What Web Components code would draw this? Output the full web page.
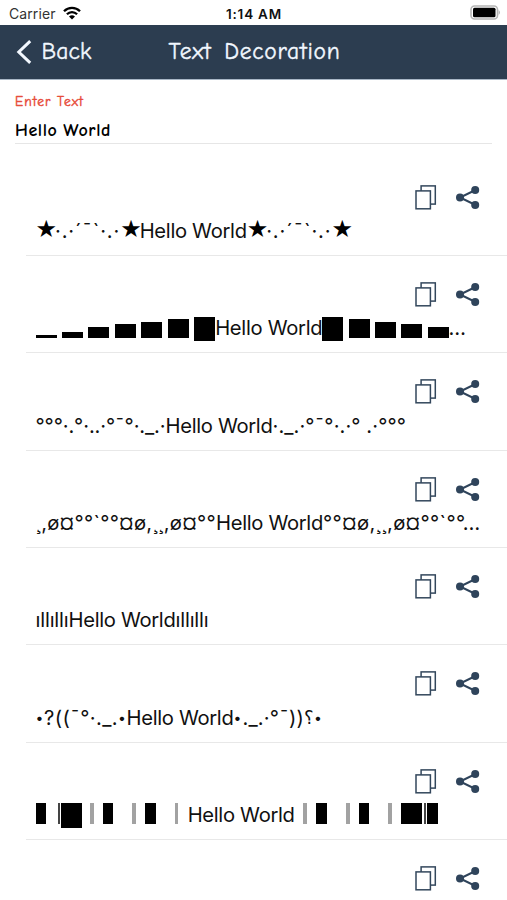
<!DOCTYPE html>
<html lang="en">
<head>
<meta charset="utf-8">
<title>Text Decoration</title>
<style>
  body {
    margin: 0;
    width: 507px;
    height: 900px;
    overflow: hidden;
    background: #fff;
    color: #111;
    font-family: Inter, "DejaVu Sans", sans-serif;
    --hand: "Chalkboard SE", "Comic Neue", Lato, sans-serif;
    --navy: #2c3d50;
  }
</style>
</head>
<body>
<status-bar></status-bar>
<nav-header><fit-run slot="back" width="50">Back</fit-run><fit-run slot="title" width="172">Text Decoration</fit-run></nav-header>
<text-field><fit-run slot="label" width="69">Enter Text</fit-run><fit-run slot="value" width="96">Hello World</fit-run></text-field>
<decor-list></decor-list>

<script>
  // a run of text spread over a fixed width
  class FitRun extends HTMLElement {
    constructor() {
      super();
      this.attachShadow({ mode: 'open' }).innerHTML = `
        <style>
          :host { display: block; flex: none; }
          span { display: inline-block; white-space: pre; vertical-align: top; }
        </style>
        <span><slot></slot></span>
      `;
    }

    connectedCallback() {
      const width = Number(this.getAttribute('width'));
      const span = this.shadowRoot.querySelector('span');
      const count = [...this.textContent].length;
      this.style.width = width + 'px';
      span.style.letterSpacing = (width - span.getBoundingClientRect().width) / count + 'px';
    }
  }

  // block and bar characters, drawn as solid cells
  class BlockGlyph extends HTMLElement {
    constructor() {
      super();
      this.attachShadow({ mode: 'open' }).innerHTML = `
        <style>
          :host {
            display: block;
            flex: none;
            overflow: hidden;
            background: currentColor;
            font-family: "DejaVu Sans", sans-serif;
            line-height: 1.3;
          }
        </style>
        <slot></slot>
      `;
    }

    connectedCallback() {
      const width = this.getAttribute('width');
      const height = this.getAttribute('height');
      this.style.width = width + 'px';
      this.style.height = height + 'px';
      this.style.fontSize = Math.min(width, height) * .5 + 'px';
      this.style.marginTop = this.getAttribute('top') + 'px';
      this.style.marginRight = this.getAttribute('gap') + 'px';
    }
  }

  class StatusBar extends HTMLElement {
    constructor() {
      super();
      this.attachShadow({ mode: 'open' }).innerHTML = `
        <style>
          :host {
            display: grid;
            grid-template-columns: 1fr auto 1fr;
            align-items: center;
            box-sizing: border-box;
            height: 25px;
            padding: 3px 6px 0 9px;
            font-size: 14px;
            line-height: 20px;
          }
          .carrier { display: flex; gap: 7px; align-items: center; color: #333; }
          .time { font-weight: 600; font-size: 13.5px; margin-left: -2px; }
          .battery { justify-self: end; margin-top: -3px; }
          svg { display: block; }
        </style>
        <div class="carrier">
          <fit-run width="46.5">Carrier</fit-run>
          <svg width="18" height="14" viewBox="0 0 18 14" fill="none" stroke="#000" stroke-width="2.3" style="margin-top:-3px">
            <path d="M1 5.2C5.5 .7 12.5 .7 17 5.2M3.9 8.3C6.8 5.4 11.2 5.4 14.1 8.3"/>
            <path d="M9 13.4L6 10.4Q9 7.9 12 10.4Z" fill="#000" stroke="none"/>
          </svg>
        </div>
        <fit-run class="time" width="56">1:14 AM</fit-run>
        <svg class="battery" width="31" height="15" viewBox="0 0 31 15">
          <rect x="1" y="1" width="26.5" height="13" rx="3.5" fill="#fff" stroke="#b5b5b5" stroke-width="1.6"/>
          <rect x="3" y="2.8" width="22.5" height="9.4" rx="1.5" fill="#000"/>
          <path d="M28.7 5Q31 7.5 28.7 10Z" fill="#aaa"/>
        </svg>
      `;
    }
  }

  class NavHeader extends HTMLElement {
    constructor() {
      super();
      this.attachShadow({ mode: 'open' }).innerHTML = `
        <style>
          :host {
            display: grid;
            grid-template-columns: 1fr auto 1fr;
            align-items: center;
            box-sizing: border-box;
            height: 54.5px;
            padding: 0 16px;
            background: var(--navy);
            border-bottom: 1px solid #a9b7c6;
            color: #f2f8ff;
            font: 23.5px/30px var(--hand);
            -webkit-text-stroke: .4px currentColor;
          }
          .back { display: flex; align-items: center; gap: 9.5px; }
          .title { word-spacing: 4px; padding-left: 2px; }
        </style>
        <div class="back">
          <svg width="16" height="24" viewBox="0 0 16 24" fill="none" stroke="currentColor" stroke-width="3">
            <path d="M14.2 1.2L2.8 12L14.2 22.8"/>
          </svg>
          <slot name="back"></slot>
        </div>
        <div class="title"><slot name="title"></slot></div>
      `;
    }
  }

  class TextField extends HTMLElement {
    constructor() {
      super();
      this.attachShadow({ mode: 'open' }).innerHTML = `
        <style>
          :host {
            display: block;
            box-sizing: border-box;
            height: 64px;
            margin: 0 15px 15.1px;
            padding-top: 13px;
            border-bottom: 1px solid #e6e6e6;
            font-family: var(--hand);
          }
          .label { font-size: 13.5px; line-height: 18px; color: #e74c3c; -webkit-text-stroke: .45px currentColor; }
          .value { margin-top: 9px; font-size: 18px; line-height: 22px; color: #000; font-weight: 700; word-spacing: -1px; }
        </style>
        <div class="label"><slot name="label"></slot></div>
        <div class="value"><slot name="value"></slot></div>
      `;
    }
  }

  class DecorRow extends HTMLElement {
    constructor() {
      super();
      this.attachShadow({ mode: 'open' }).innerHTML = `
        <style>
          :host { display: block; box-sizing: border-box; height: 97.36px; padding-top: 25px; }
          .actions { display: flex; justify-content: flex-end; gap: 18px; padding-right: 27px; height: 26px; }
          .text {
            display: flex;
            align-items: flex-start;
            height: 41px;
            box-sizing: border-box;
            margin-left: 26px;
            padding-left: 9.5px;
            margin-top: 5.4px;
            border-bottom: 1px solid #e8e8e8;
            font-size: 20.2px;
            line-height: 31px;
          }
          svg { display: block; }
        </style>
        <div class="actions">
          <svg width="23" height="26" viewBox="0 0 23 26" fill="#fff" stroke="#33475c" stroke-width="1.5">
            <rect x="7.1" y="1.9" width="14.2" height="18.2"/>
            <rect x="2" y="6.9" width="14.4" height="17.9"/>
          </svg>
          <svg width="25" height="26" viewBox="0 0 25 26" fill="#2f445b" stroke="#2f445b">
            <path d="M20.5 6L5 13.5L20.5 21" fill="none" stroke-width="2"/>
            <g stroke="none"><circle cx="5" cy="13.4" r="4"/><circle cx="20.2" cy="6" r="4"/><circle cx="20.2" cy="21" r="4"/></g>
          </svg>
        </div>
        <div class="text"><slot></slot></div>
      `;
    }
  }

  class DecorList extends HTMLElement {
    constructor() {
      super();
      const run = (text, width, style = '') => `<fit-run width="${width}" style="${style}">${text}</fit-run>`;
      const block = (char, width, height, top, gap, color = '#000') =>
        `<block-glyph width="${width}" height="${height}" top="${top}" gap="${gap}" style="color:${color}">${char}</block-glyph>`;
      const star = run('★', 19.5, 'font-family:DejaVu Sans;font-size:24px;margin-top:-.5px;color:#000');
      const hello = run('Hello World', 107);
      const bullet = width => run('•', width, 'font-size:14px');
      const step = (char, height, gap) => block(char, 21, height, 25.2 - height, gap);
      const half = gap => block('▌', 10.8, 21, 4.2, gap);
      const gray = gap => block('║', 3.6, 21, 4.2, gap, '#a2a2a2');
      const thin = gap => block('│', 2.5, 21, 4.2, gap, '#444');

      const rows = [
        star + run('·.·´¯`·.·', 65.2) + star + hello + star + run('·.·´¯`·.·', 65.2) + star,
        step('▁', 3, 5.45) + step('▂', 5.6, 5.45) + step('▄', 10.7, 5.45) + step('▅', 13.2, 5.45) +
          step('▆', 15.7, 5.45) + step('▇', 18.3, 5.45) + block('█', 21, 24.5, 4.2, 0) + run('Hello World', 107.3) +
          block('█', 21, 24.5, 4.2, 5.3) + step('▇', 18.3, 5.3) + step('▆', 15.7, 5.3) + step('▅', 13.2, 5.3) +
          step('▄', 10.7, 0) + run('…', 17),
        run('°°°·.°·..·°¯°·._.·', 130) + hello + run('·._.·°¯°·.·° .·°°°', 133.5),
        run('¸,ø¤°°`°°¤ø,¸¸,ø¤°°', 180.5) + hello + run('°°¤ø,¸¸,ø¤°°`°°…', 157.5),
        run('ıllıllı', 33) + hello + run('ıllıllı', 33),
        bullet(8.5) + run('?((¯°·._.', 74) + bullet(8.5) + hello + bullet(9) + run('._.·°¯))', 61.5) +
          run('؟', 10, 'font-family:DejaVu Sans;font-size:18px') + bullet(9),
        half(11.5) + thin(.8) + block('█', 21, 24.5, 4.2, 8) + gray(9) + half(19) + gray(9) + half(19) + gray(9.2) +
          hello + '<span style="width:8.8px"></span>' + gray(9) + half(19.1) + gray(9) + half(19.1) + gray(9) +
          block('█', 21, 21, 4.2, 1.9) + thin(.8) + half(0),
        ''
      ];
      this.attachShadow({ mode: 'open' }).innerHTML = `
        <style>
          :host { display: block; }
        </style>
        ${rows.map(row => `<decor-row>${row}</decor-row>`).join('')}
      `;
    }
  }

  customElements.define('status-bar', StatusBar);
  customElements.define('nav-header', NavHeader);
  customElements.define('text-field', TextField);
  customElements.define('decor-row', DecorRow);
  customElements.define('decor-list', DecorList);
  customElements.define('block-glyph', BlockGlyph);
  // last, so the runs are measured in their final fonts
  customElements.define('fit-run', FitRun);
</script>
</body>
</html>
